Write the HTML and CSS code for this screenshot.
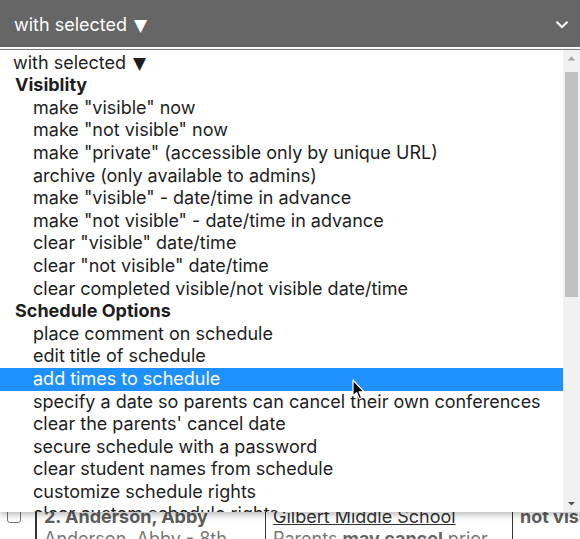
FILE: index.html
```html
<!DOCTYPE html>
<html>
<head>
<meta charset="utf-8">
<link rel="stylesheet" href="styles.css">
</head>
<body>
<div class="page">
  <div class="selectbar">
    <span class="selectbar-label">with selected <span class="tri">▼</span></span>
    <svg class="chev" width="14" height="9" viewBox="0 0 14 9"><path d="M1.5 1.8 L7 7 L12.5 1.8" fill="none" stroke="#fff" stroke-width="2"/></svg>
  </div>
  <div class="table">
    <div class="row">
      <div class="cell-check"><span class="checkbox"></span></div>
      <div class="cell-name">
        <div class="name">2. Anderson, Abby</div>
        <div class="sub">Anderson, Abby - 8th</div>
      </div>
      <div class="cell-school">
        <div class="school">Gilbert Middle School</div>
        <div class="sub">Parents <b>may cancel</b> prior</div>
      </div>
      <div class="cell-status">
        <div class="status">not visible</div>
      </div>
    </div>
  </div>

  <div class="popup">
    <div class="list">
      <div class="opt top">with selected <span class="tri">▼</span></div>
      <div class="grp">Visiblity</div>
      <div class="opt">make "visible" now</div>
      <div class="opt">make "not visible" now</div>
      <div class="opt">make "private" (accessible only by unique URL)</div>
      <div class="opt">archive (only available to admins)</div>
      <div class="opt">make "visible" - date/time in advance</div>
      <div class="opt">make "not visible" - date/time in advance</div>
      <div class="opt">clear "visible" date/time</div>
      <div class="opt">clear "not visible" date/time</div>
      <div class="opt">clear completed visible/not visible date/time</div>
      <div class="grp">Schedule Options</div>
      <div class="opt">place comment on schedule</div>
      <div class="opt">edit title of schedule</div>
      <div class="opt sel">add times to schedule</div>
      <div class="opt">specify a date so parents can cancel their own conferences</div>
      <div class="opt">clear the parents' cancel date</div>
      <div class="opt">secure schedule with a password</div>
      <div class="opt">clear student names from schedule</div>
      <div class="opt">customize schedule rights</div>
      <div class="opt">clear custom schedule rights</div>
    </div>
    <div class="scrollbar">
      <svg class="sb-arrow" width="17" height="17" viewBox="0 0 17 17"><path d="M4.5 10.5 L8.5 6.5 L12.5 10.5 Z" fill="#a3a3a3"/></svg>
      <div class="sb-track"><div class="sb-thumb"></div></div>
      <svg class="sb-arrow" width="17" height="17" viewBox="0 0 17 17"><path d="M5 7 L8.5 10.5 L12 7 Z" fill="#505050"/></svg>
    </div>
  </div>

  <svg class="cursor" width="14" height="22" viewBox="0 0 14 22"><path d="M1 1 L1 17 L4.6 13.6 L7.3 19.8 L9.7 18.8 L7.1 12.8 L12 12.8 Z" fill="#000" stroke="#fff" stroke-width="1.2" stroke-linejoin="round"/></svg>
</div>
</body>
</html>
```

FILE: styles.css
```css
* { box-sizing: border-box; }
html, body {
  margin: 0;
  padding: 0;
  background: #fff;
}
body {
  font-family: Inter, "Noto Sans", "DejaVu Sans", sans-serif;
  width: 580px;
  height: 539px;
  overflow: hidden;
}
.page {
  position: relative;
  width: 580px;
  height: 539px;
}
.tri {
  font-family: "DejaVu Sans", sans-serif;
  font-size: 17px;
  margin-left: 2px;
}
.selectbar {
  height: 47px;
  background: #666666;
  display: flex;
  align-items: center;
  justify-content: space-between;
  padding: 0 11px 0 14px;
  color: #fff;
  font-size: 18px;
}
.selectbar-label { padding-top: 1px; }
.chev { margin-top: 1px; }

.table {
  padding-top: 458px;
}
.row {
  display: flex;
  height: 40px;
}
.cell-check {
  width: 35px;
  padding: 4px 0 0 7px;
}
.checkbox {
  display: block;
  width: 14px;
  height: 14px;
  border: 1.5px solid #767676;
  border-radius: 3px;
  background: #fff;
}
.cell-name {
  width: 230px;
  border-left: 2px solid #333;
  padding: 1px 0 0 7px;
  overflow: hidden;
}
.cell-school {
  width: 247px;
  border-left: 1px solid #333;
  padding: 1px 0 0 7px;
  overflow: hidden;
}
.cell-status {
  flex: 1;
  border-left: 1px solid #333;
  padding: 1px 0 0 7px;
  overflow: hidden;
  white-space: nowrap;
}
.name {
  font-weight: 700;
  font-size: 18px;
  color: #5e5e5e;
  line-height: 22px;
}
.school {
  font-size: 18px;
  color: #333;
  text-decoration: underline;
  line-height: 22px;
}
.status {
  font-weight: 700;
  font-size: 18px;
  color: #5e5e5e;
  line-height: 22px;
}
.sub {
  font-size: 18px;
  color: #777;
  line-height: 22px;
  white-space: nowrap;
}
.sub b { color: #666; }

.popup {
  position: absolute;
  left: 0;
  top: 49px;
  width: 580px;
  height: 463px;
  border-top: 1px solid #7a7a7a;
  background: #fff;
  display: flex;
  box-shadow: 0 3px 6px rgba(0,0,0,0.25);
}
.list {
  width: 563px;
  overflow: hidden;
  padding-top: 1.6px;
  font-size: 18px;
  color: #1e1e1e;
}
.opt, .grp {
  height: 22.6px;
  line-height: 22.6px;
  white-space: nowrap;
}
.opt { padding-left: 33px; }
.opt.top { padding-left: 13px; }
.grp {
  padding-left: 15px;
  font-weight: 700;
}
.opt.sel {
  background: #1e90ff;
  color: #fff;
}
.scrollbar {
  width: 17px;
  background: #f1f1f1;
  display: flex;
  flex-direction: column;
}
.sb-arrow { display: block; flex: none; }
.sb-track {
  flex: 1;
  padding: 5px 2px 0 2px;
}
.sb-thumb {
  height: 225px;
  background: #c1c1c1;
}
.cursor {
  position: absolute;
  left: 352px;
  top: 379px;
}
```
